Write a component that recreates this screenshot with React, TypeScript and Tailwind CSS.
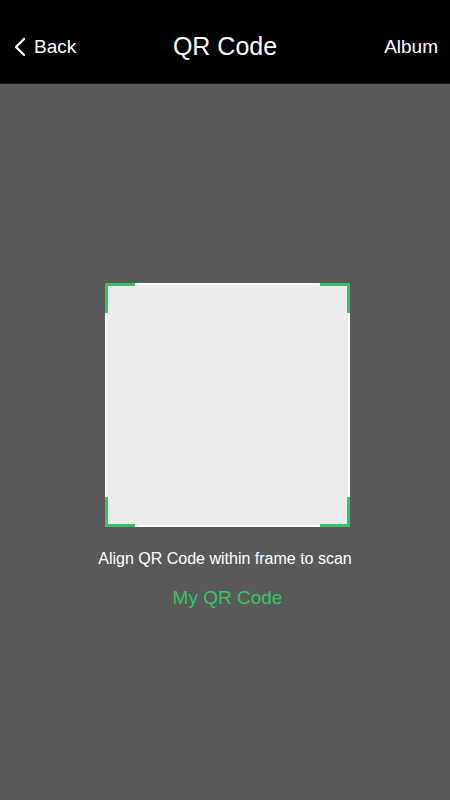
import React from 'react';

// corner brackets drawn over the scan frame
function FrameCorners() {
  const g = '#33c463';
  return (
    <svg className="absolute -left-[2px] -top-[2px] pointer-events-none" width="245" height="244" viewBox="0 0 245 244" fill={g}>
      <rect x="0" y="0" width="30" height="3" />
      <rect x="0" y="0" width="3" height="30" />
      <rect x="215" y="0" width="30" height="3" />
      <rect x="242" y="0" width="3" height="30" />
      <rect x="0" y="241" width="30" height="3" />
      <rect x="0" y="214" width="3" height="30" />
      <rect x="215" y="241" width="30" height="3" />
      <rect x="242" y="214" width="3" height="30" />
    </svg>
  );
}

export default function App() {
  return (
    <div className="w-[450px] h-[800px] flex flex-col bg-[#595959] font-['Liberation_Sans',Arial,sans-serif] overflow-hidden">
      {/* Nav bar */}
      <div className="h-[84px] bg-black border-b border-[#1a1a1a] grid grid-cols-[1fr_auto_1fr] items-center px-[12px] pt-[10px] text-white shrink-0">
        <div className="flex items-center gap-[8px] text-[19px] pl-[2px] pt-[1px]">
          <svg width="12" height="20" viewBox="0 0 12 20" fill="none">
            <path d="M10 2L2 10l8 8" stroke="white" strokeWidth="2.4" strokeLinecap="round" strokeLinejoin="round" />
          </svg>
          <span>Back</span>
        </div>
        <div className="text-[25px]">QR Code</div>
        <div className="justify-self-end text-[19px] pt-[2px]">Album</div>
      </div>

      {/* Scan area */}
      <div className="flex-1 flex flex-col items-center pt-[199px]">
        <div className="ml-[5px] relative w-[245px] h-[244px] bg-[#ececec] border-2 border-white">
          <FrameCorners />
        </div>
        <p className="mt-[20px] text-white text-[16px]">Align QR Code within frame to scan</p>
        <p className="mt-[13px] text-[#33c463] text-[19px] ml-[5px]">My QR Code</p>
      </div>
    </div>
  );
}
